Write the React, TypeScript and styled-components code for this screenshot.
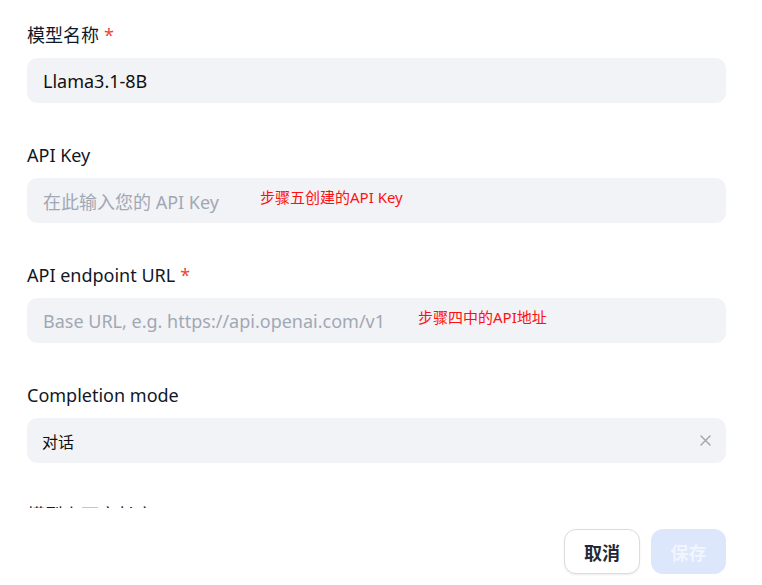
import styled, { createGlobalStyle } from "styled-components";

const GlobalStyle = createGlobalStyle`
  body {
    margin: 0;
    background: #ffffff;
    font-family: "Noto Sans", "Noto Sans CJK SC", sans-serif;
  }
`;

type FieldDef = {
  label: string;
  required?: boolean;
  value?: string;
  placeholder?: string;
  note?: string;
  noteLeft?: number;
  select?: boolean;
};

const fields: FieldDef[] = [
  { label: "模型名称", required: true, value: "Llama3.1-8B" },
  {
    label: "API Key",
    placeholder: "在此输入您的 API Key",
    note: "步骤五创建的API Key",
    noteLeft: 233,
  },
  {
    label: "API endpoint URL",
    required: true,
    placeholder: "Base URL, e.g. https://api.openai.com/v1",
    note: "步骤四中的API地址",
    noteLeft: 391,
  },
  { label: "Completion mode", value: "对话", select: true },
  { label: "模型上下文长度", required: true, value: "4096" },
];

export default function App() {
  return (
    <Page>
      <GlobalStyle />
      <ScrollArea>
        {fields.map((f) => (
          <Field key={f.label}>
            <Label>
              {f.label}
              {f.required && <Star>*</Star>}
            </Label>
            <InputBox>
              {f.value ? (
                <Value $small={f.select}>{f.value}</Value>
              ) : (
                <Placeholder>{f.placeholder}</Placeholder>
              )}
              {f.note && (
                <Note style={{ left: f.noteLeft }}>{f.note}</Note>
              )}
              {f.select && (
                <Clear>
                  <svg width="11" height="11" viewBox="0 0 11 11">
                    <path
                      d="M1 1L10 10M10 1L1 10"
                      stroke="#a3a3a3"
                      strokeWidth="1.4"
                      strokeLinecap="round"
                    />
                  </svg>
                </Clear>
              )}
            </InputBox>
          </Field>
        ))}
      </ScrollArea>
      <Footer>
        <CancelButton>取消</CancelButton>
        <SaveButton disabled>保存</SaveButton>
      </Footer>
    </Page>
  );
}

const Page = styled.div`
  width: 762px;
  height: 585px;
  display: flex;
  flex-direction: column;
  overflow: hidden;
`;

const ScrollArea = styled.div`
  height: 508px;
  overflow: hidden;
  box-sizing: border-box;
  padding: 23px 36px 0 27px;
  display: flex;
  flex-direction: column;
  gap: 40px;
  flex-shrink: 0;
`;

const Field = styled.div`
  display: flex;
  flex-direction: column;
  gap: 11px;
`;

const Label = styled.div`
  height: 24px;
  line-height: 24px;
  font-size: 18px;
  color: #111827;
`;

const Star = styled.span`
  color: #f04438;
  margin-left: 5px;
`;

const InputBox = styled.div`
  position: relative;
  height: 45px;
  border-radius: 10px;
  background: #f2f3f6;
  display: flex;
  align-items: center;
  padding: 0 16px;
`;

const Value = styled.span<{ $small?: boolean }>`
  font-size: ${(p) => (p.$small ? "16px" : "18px")};
  color: #101010;
  margin-left: ${(p) => (p.$small ? "-1px" : "0")};
`;

const Placeholder = styled.span`
  font-size: 18px;
  color: #a1a8b5;
`;

const Note = styled.span`
  position: absolute;
  top: 8px;
  font-size: 15px;
  color: #ff1010;
`;

const Clear = styled.span`
  margin-left: auto;
  display: flex;
  align-items: center;
  margin-right: -1px;
`;

const Footer = styled.div`
  display: flex;
  justify-content: flex-end;
  gap: 11px;
  padding: 21px 36px 0 0;
`;

const CancelButton = styled.button`
  width: 76px;
  height: 45px;
  border-radius: 12px;
  border: 1px solid #dcdcdc;
  background: #ffffff;
  box-shadow: 0 1px 2px rgba(0, 0, 0, 0.08);
  font-family: "Noto Sans CJK SC", sans-serif;
  font-size: 18px;
  font-weight: 700;
  color: #1f2937;
`;

const SaveButton = styled.button`
  width: 75px;
  height: 45px;
  border-radius: 12px;
  border: none;
  background: #dce7fb;
  font-family: "Noto Sans CJK SC", sans-serif;
  font-size: 18px;
  font-weight: 700;
  color: #f1f5fd;
`;
